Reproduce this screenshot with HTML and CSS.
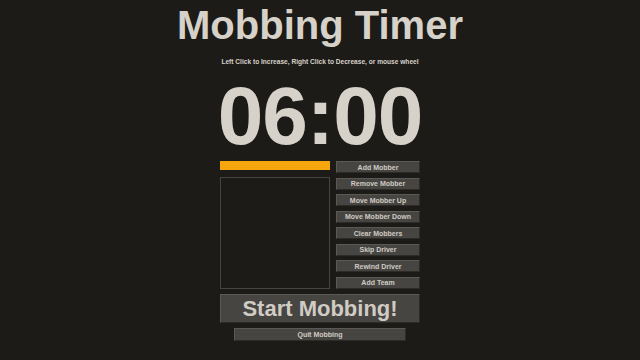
FILE: index.html
```html
<!DOCTYPE html>
<html lang="en">
<head>
  <meta charset="UTF-8" />
  <title>Mobbing Timer</title>
  <link rel="stylesheet" href="styles.css">
</head>
<body>
  <div class="app">
    <h1>Mobbing Timer</h1>
    <p class="hint">Left Click to Increase, Right Click to Decrease, or mouse wheel</p>
    <div class="timer">06:00</div>

    <div class="main">
      <div class="left">
        <div class="progress"></div>
        <div class="mobbers"></div>
      </div>
      <div class="buttons">
        <button class="btn">Add Mobber</button>
        <button class="btn">Remove Mobber</button>
        <button class="btn">Move Mobber Up</button>
        <button class="btn">Move Mobber Down</button>
        <button class="btn">Clear Mobbers</button>
        <button class="btn">Skip Driver</button>
        <button class="btn">Rewind Driver</button>
        <button class="btn">Add Team</button>
      </div>
    </div>

    <button class="btn start">Start Mobbing!</button>
    <button class="btn quit">Quit Mobbing</button>
  </div>
</body>
</html>
```

FILE: styles.css
```css
body {
  margin: 0;
  background-color: #1c1b18;
  font-family: "Liberation Sans", Arial, sans-serif;
  color: #d6d1c9;
}
.app {
  width: 200px;
  margin: 0 auto;
  display: flex;
  flex-direction: column;
  align-items: center;
}
h1 {
  margin: 2px 0 0;
  font-size: 40px;
  line-height: 46px;
  font-weight: bold;
  white-space: nowrap;
}
.hint {
  margin: 10px 0 0;
  font-size: 6.6px;
  line-height: 8px;
  font-weight: bold;
  white-space: nowrap;
}
.timer {
  margin-top: 9px;
  font-size: 82px;
  line-height: 82px;
  letter-spacing: -1px;
  font-weight: bold;
}
.main {
  margin-top: 4px;
  width: 100%;
  display: flex;
  gap: 6px;
}
.left {
  width: 110px;
  display: flex;
  flex-direction: column;
  gap: 7px;
}
.progress {
  height: 9px;
  background-color: #f5a60c;
}
.mobbers {
  flex: 1;
  border: 1px solid #45443f;
}
.buttons {
  flex: 1;
  height: 128px;
  display: flex;
  flex-direction: column;
  justify-content: space-between;
}
.btn {
  display: block;
  margin: 0;
  padding: 0;
  height: 12px;
  background-color: #474542;
  color: #d0cbc3;
  font-family: "Liberation Sans", Arial, sans-serif;
  font-size: 7px;
  font-weight: bold;
  border: 1px solid;
  border-color: #5b5955 #2c2b28 #2c2b28 #5b5955;
  white-space: nowrap;
}
.start {
  margin-top: 5px;
  width: 100%;
  height: 29px;
  font-size: 22px;
}
.quit {
  margin-top: 5px;
  width: 172px;
  height: 13px;
}
```
